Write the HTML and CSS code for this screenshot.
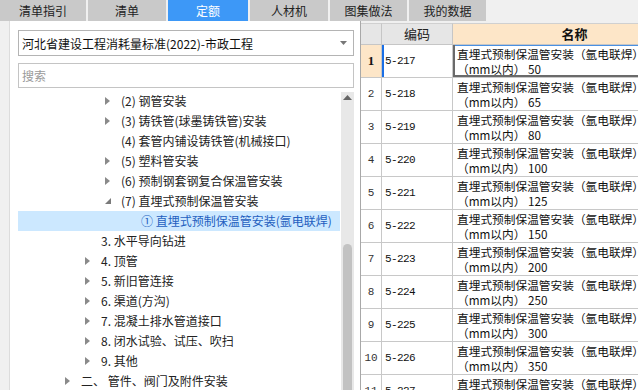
FILE: index.html
```html
<!DOCTYPE html>
<html lang="zh-CN">
  <head>
    <meta charset="UTF-8" />
    <title>定额</title>
    <link rel="stylesheet" href="styles.css">
  </head>
  <body>
    <!-- tabs -->
    <div class="tabs">
      <div class="tab t1">清单指引</div>
      <div class="tab">清单</div>
      <div class="tab active t3">定额</div>
      <div class="tab">人材机</div>
      <div class="tab t5">图集做法</div>
      <div class="tab t5">我的数据</div>
    </div>

    <div class="main">
      <!-- left: tree -->
      <div class="side">
        <div class="select">
          <span>河北省建设工程消耗量标准(2022)-市政工程</span>
          <svg class="caret" width="7" height="4" viewBox="0 0 7 4"><polygon points="0,0 7,0 3.5,4" fill="#777"/></svg>
        </div>
        <div class="search">搜索</div>
        <div class="tree-wrap">
          <ul class="tree">
            <li class="node l2"><i class="arr"></i>(2) 钢管安装</li>
            <li class="node l2"><i class="arr"></i>(3) 铸铁管(球墨铸铁管)安装</li>
            <li class="node l2"><i class="noarr"></i>(4) 套管内铺设铸铁管(机械接口)</li>
            <li class="node l2"><i class="arr"></i>(5) 塑料管安装</li>
            <li class="node l2"><i class="arr"></i>(6) 预制钢套钢复合保温管安装</li>
            <li class="node l2"><i class="arr open"></i>(7) 直埋式预制保温管安装</li>
            <li class="node l3 sel"><i class="noarr"></i>① 直埋式预制保温管安装(氩电联焊)</li>
            <li class="node l1"><i class="noarr"></i>3. 水平导向钻进</li>
            <li class="node l1"><i class="arr"></i>4. 顶管</li>
            <li class="node l1"><i class="arr"></i>5. 新旧管连接</li>
            <li class="node l1"><i class="arr"></i>6. 渠道(方沟)</li>
            <li class="node l1"><i class="arr"></i>7. 混凝土排水管道接口</li>
            <li class="node l1"><i class="arr"></i>8. 闭水试验、试压、吹扫</li>
            <li class="node l1"><i class="arr"></i>9. 其他</li>
            <li class="node l0"><i class="arr"></i>二、&nbsp;管件、阀门及附件安装</li>
          </ul>
          <div class="vscroll">
            <svg class="up" width="9" height="5" viewBox="0 0 9 5"><polygon points="0,5 9,5 4.5,0" fill="#666"/></svg>
            <div class="thumb"></div>
          </div>
        </div>
      </div>

      <!-- right: quota table -->
      <div class="grid">
        <div class="hd num"></div>
        <div class="hd">编码</div>
        <div class="hd name-hd">名称</div>
      </div>
    </div>

<script>
    // rows of the quota list
    var sizes = [50, 65, 80, 100, 125, 150, 200, 250, 300, 350, 400]
    var grid = document.querySelector(".grid")
    var html = ""
    sizes.forEach(function(s, i) {
        var cur = i == 0 ? " cur" : ""
        html += '<div class="cell num' + cur + '">' + (i + 1) + '</div>'
        html += '<div class="cell code' + cur + '">5-' + (217 + i) + '</div>'
        html += '<div class="cell name' + cur + '">直埋式预制保温管安装（氩电联焊）<br>（mm以内） ' + s + '</div>'
    })
    grid.innerHTML += html
</script>
  </body>
</html>
```

FILE: styles.css
```css
* {
    margin: 0;
    padding: 0;
    box-sizing: border-box;
}

body {
    width: 638px;
    height: 390px;
    overflow: hidden;
    background: #f0f0f0;
    font-family: "Noto Sans CJK SC", "Noto Sans", sans-serif;
    font-size: 12px;
    color: #222;
}

/* tabs */
.tabs {
    display: flex;
    gap: 2px;
    height: 21px;
}

.tab {
    width: 78px;
    background: #c9c9c9;
    text-align: center;
    line-height: 21px;
    font-size: 12px;
    color: #222;
}

.tab.t1 { width: 86px; }
.tab.t3 { width: 80px; }
.tab.t5 { width: 77px; }

.tab.active {
    background: #3d98f7;
    color: #fff;
}

.main {
    display: flex;
    height: 369px;
}

/* left side */
.side {
    flex: none;
    width: 352px;
    margin-left: 9px;
    background: #fff;
    border-left: 1px solid #dcdcdc;
    border-right: 1px solid #a8a8a8;
    padding: 9px 0 0 8px;
    display: flex;
    flex-direction: column;
}

.select {
    width: 336px;
    height: 26px;
    border: 1px solid #b4b4b4;
    display: flex;
    align-items: center;
    justify-content: space-between;
    padding: 0 6px 0 3px;
    font-size: 12px;
    color: #111;
}

.search {
    width: 336px;
    height: 25px;
    margin-top: 7px;
    border: 1px solid #c4c4c4;
    padding-left: 3px;
    line-height: 23px;
    color: #9a9a9a;
}

.tree-wrap {
    display: flex;
    margin-top: 3px;
    flex: 1;
    overflow: hidden;
}

.tree {
    list-style: none;
    width: 322px;
}

.node {
    height: 20px;
    line-height: 20px;
    display: flex;
    align-items: center;
    white-space: nowrap;
    color: #222;
}

.node.l0 { padding-left: 47px; }
.node.l1 { padding-left: 67px; }
.node.l2 { padding-left: 87px; }
.node.l3 { padding-left: 107px; }

.node.sel {
    background: #cce8ff;
    color: #1f5fc0;
}

.arr,
.noarr {
    width: 16px;
    height: 20px;
    flex: none;
    position: relative;
}

.arr::before {
    content: "";
    position: absolute;
    left: 0;
    top: 6px;
    border-left: 5px solid #8a8a8a;
    border-top: 4px solid transparent;
    border-bottom: 4px solid transparent;
}

.arr.open::before {
    left: 0;
    top: 7px;
    border-left: 6px solid transparent;
    border-top: none;
    border-bottom: 6px solid #7a7a7a;
}

.vscroll {
    width: 13px;
    margin-left: 1px;
    margin-top: 1px;
    background: #e8e8e8;
    position: relative;
}

.vscroll .up {
    display: block;
    margin: 3px auto 0;
}

.thumb {
    position: absolute;
    left: 2px;
    top: 152px;
    width: 9px;
    height: 200px;
    border-radius: 5px;
    background: #c2c2c2;
}

/* right grid */
.grid {
    margin-top: 2px;
    display: grid;
    grid-template-columns: 21px 71px 244px;
    grid-auto-rows: 33px;
    grid-template-rows: 22px;
    background: #fff;
    align-content: start;
    flex: none;
}

.hd {
    background: #e6e6e6;
    border-right: 1px solid #c6c6c6;
    border-bottom: 1px solid #c6c6c6;
    border-top: 1px solid #d0d0d0;
    text-align: center;
    font-size: 13px;
    line-height: 20px;
    color: #222;
}

.hd.name-hd {
    background: #fde6c8;
    font-weight: bold;
    color: #111;
}

.cell {
    border-right: 1px solid #c8c8c8;
    border-bottom: 1px solid #c8c8c8;
    display: flex;
    align-items: center;
    color: #111;
}

.cell.num {
    justify-content: center;
    font-family: "Liberation Mono", monospace;
    font-size: 11px;
    color: #333;
}

.cell.num.cur {
    background: #fde6c8;
    font-family: "Liberation Serif", serif;
    font-weight: bold;
    font-size: 13px;
    color: #111;
}

.cell.code {
    padding-left: 3px;
    font-family: "Liberation Mono", monospace;
    font-size: 11px;
    letter-spacing: -0.6px;
}

.cell.code.cur {
    box-shadow: inset 2px 0 #1a6fe6;
}

.cell.name {
    padding-left: 4px;
    font-size: 11.7px;
    line-height: 15px;
    white-space: nowrap;
}

.cell.name.cur {
    box-shadow: inset 2px 0 #6a6a6a, inset 0 -2px #6a6a6a, inset 0 1px #4a90e2;
}
```
